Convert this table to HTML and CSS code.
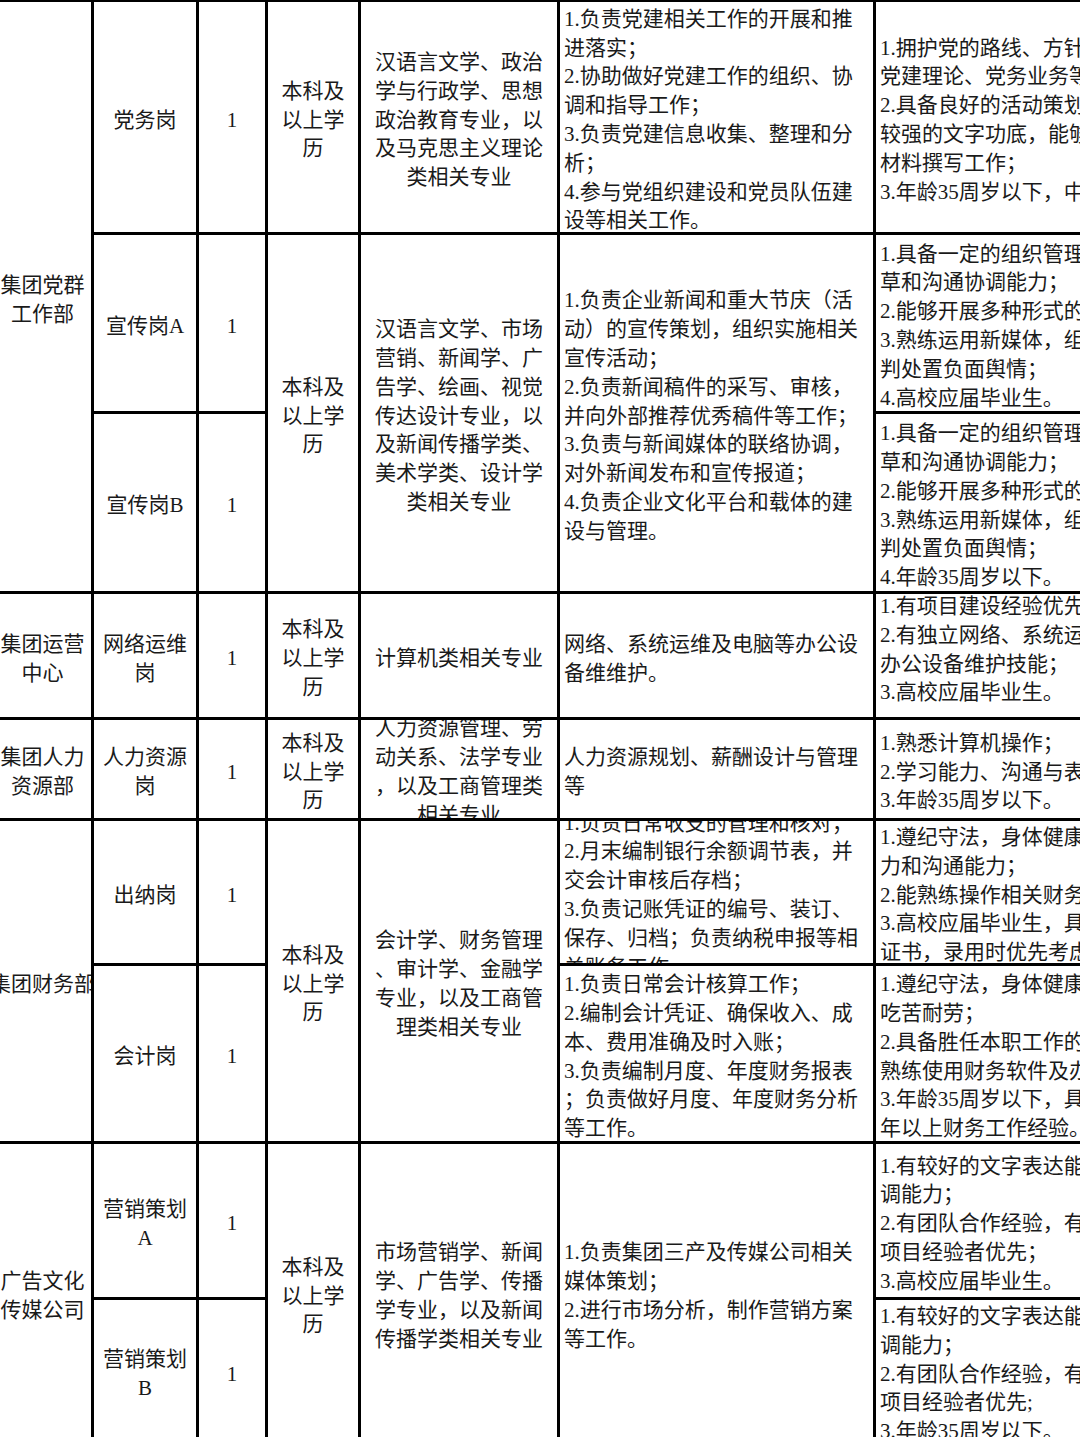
FILE: index.html
```html
<!DOCTYPE html>
<html lang="zh-CN">
<head>
<meta charset="utf-8">
<title>招聘岗位表</title>
<link rel="stylesheet" href="styles.css">
</head>
<body>
<div class="sheet">
  <!-- 集团党群工作部 -->
  <div class="cell k1 rs3 mid"><div class="t">集团党群<br>工作部</div></div>
  <div class="cell k2 mid"><div class="t">党务岗</div></div>
  <div class="cell k3 mid"><div class="t">1</div></div>
  <div class="cell k4 mid"><div class="t">本科及<br>以上学<br>历</div></div>
  <div class="cell k5 mid"><div class="t">汉语言文学、政治<br>学与行政学、思想<br>政治教育专业，以<br>及马克思主义理论<br>类相关专业</div></div>
  <div class="cell k6 left"><div class="t">1.负责党建相关工作的开展和推<br>进落实；<br>2.协助做好党建工作的组织、协<br>调和指导工作；<br>3.负责党建信息收集、整理和分<br>析；<br>4.参与党组织建设和党员队伍建<br>设等相关工作。</div></div>
  <div class="cell k7 left"><div class="t">1.拥护党的路线、方针、政策，熟悉<br>党建理论、党务业务等知识；<br>2.具备良好的活动策划能力，具有<br>较强的文字功底，能够胜任相关<br>材料撰写工作；<br>3.年龄35周岁以下，中共党员。</div></div>

  <div class="cell k2 mid"><div class="t">宣传岗A</div></div>
  <div class="cell k3 mid"><div class="t">1</div></div>
  <div class="cell k4 rs2 mid"><div class="t">本科及<br>以上学<br>历</div></div>
  <div class="cell k5 rs2 mid"><div class="t">汉语言文学、市场<br>营销、新闻学、广<br>告学、绘画、视觉<br>传达设计专业，以<br>及新闻传播学类、<br>美术学类、设计学<br>类相关专业</div></div>
  <div class="cell k6 rs2 left"><div class="t">1.负责企业新闻和重大节庆（活<br>动）的宣传策划，组织实施相关<br>宣传活动；<br>2.负责新闻稿件的采写、审核，<br>并向外部推荐优秀稿件等工作；<br>3.负责与新闻媒体的联络协调，<br>对外新闻发布和宣传报道；<br>4.负责企业文化平台和载体的建<br>设与管理。</div></div>
  <div class="cell k7 left"><div class="t">1.具备一定的组织管理能力和文字起<br>草和沟通协调能力；<br>2.能够开展多种形式的宣传活动；<br>3.熟练运用新媒体，组织引导舆论，研<br>判处置负面舆情；<br>4.高校应届毕业生。</div></div>

  <div class="cell k2 mid"><div class="t">宣传岗B</div></div>
  <div class="cell k3 mid"><div class="t">1</div></div>
  <div class="cell k7 left"><div class="t">1.具备一定的组织管理能力和文字起<br>草和沟通协调能力；<br>2.能够开展多种形式的宣传活动；<br>3.熟练运用新媒体，组织引导舆论，研<br>判处置负面舆情；<br>4.年龄35周岁以下。</div></div>

  <!-- 集团运营中心 -->
  <div class="cell k1 mid"><div class="t">集团运营<br>中心</div></div>
  <div class="cell k2 mid"><div class="t">网络运维<br>岗</div></div>
  <div class="cell k3 mid"><div class="t">1</div></div>
  <div class="cell k4 mid"><div class="t">本科及<br>以上学<br>历</div></div>
  <div class="cell k5 mid"><div class="t">计算机类相关专业</div></div>
  <div class="cell k6 left"><div class="t">网络、系统运维及电脑等办公设<br>备维维护。</div></div>
  <div class="cell k7 left lift"><div class="t">1.有项目建设经验优先；<br>2.有独立网络、系统运维及电脑等<br>办公设备维护技能；<br>3.高校应届毕业生。</div></div>

  <!-- 集团人力资源部 -->
  <div class="cell k1 mid"><div class="t">集团人力<br>资源部</div></div>
  <div class="cell k2 mid"><div class="t">人力资源<br>岗</div></div>
  <div class="cell k3 mid"><div class="t">1</div></div>
  <div class="cell k4 mid"><div class="t">本科及<br>以上学<br>历</div></div>
  <div class="cell k5 mid"><div class="t">人力资源管理、劳<br>动关系、法学专业<br>，以及工商管理类<br>相关专业</div></div>
  <div class="cell k6 left"><div class="t">人力资源规划、薪酬设计与管理<br>等</div></div>
  <div class="cell k7 left"><div class="t">1.熟悉计算机操作；<br>2.学习能力、沟通与表达能力强；<br>3.年龄35周岁以下。</div></div>

  <!-- 集团财务部 -->
  <div class="cell k1 rs2 mid"><div class="t">集团财务部</div></div>
  <div class="cell k2 mid"><div class="t">出纳岗</div></div>
  <div class="cell k3 mid"><div class="t">1</div></div>
  <div class="cell k4 rs2 mid"><div class="t">本科及<br>以上学<br>历</div></div>
  <div class="cell k5 rs2 mid"><div class="t">会计学、财务管理<br>、审计学、金融学<br>专业，以及工商管<br>理类相关专业</div></div>
  <div class="cell k6 left"><div class="t">1.负责日常收支的管理和核对；<br>2.月末编制银行余额调节表，并<br>交会计审核后存档；<br>3.负责记账凭证的编号、装订、<br>保存、归档；负责纳税申报等相<br>关账务工作。</div></div>
  <div class="cell k7 left"><div class="t">1.遵纪守法，身体健康，具有较强的学习能<br>力和沟通能力；<br>2.能熟练操作相关财务软件；<br>3.高校应届毕业生，具有初级会计资格<br>证书，录用时优先考虑。</div></div>

  <div class="cell k2 mid"><div class="t">会计岗</div></div>
  <div class="cell k3 mid"><div class="t">1</div></div>
  <div class="cell k6 left"><div class="t">1.负责日常会计核算工作；<br>2.编制会计凭证、确保收入、成<br>本、费用准确及时入账；<br>3.负责编制月度、年度财务报表<br>；负责做好月度、年度财务分析<br>等工作。</div></div>
  <div class="cell k7 left"><div class="t">1.遵纪守法，身体健康，能<br>吃苦耐劳；<br>2.具备胜任本职工作的专业知识，<br>熟练使用财务软件及办公软件；<br>3.年龄35周岁以下，具有2<br>年以上财务工作经验。</div></div>

  <!-- 广告文化传媒公司 -->
  <div class="cell k1 rs2 mid"><div class="t">广告文化<br>传媒公司</div></div>
  <div class="cell k2 mid"><div class="t">营销策划<br>A</div></div>
  <div class="cell k3 mid"><div class="t">1</div></div>
  <div class="cell k4 rs2 mid"><div class="t">本科及<br>以上学<br>历</div></div>
  <div class="cell k5 rs2 mid"><div class="t">市场营销学、新闻<br>学、广告学、传播<br>学专业，以及新闻<br>传播学类相关专业</div></div>
  <div class="cell k6 rs2 left"><div class="t">1.负责集团三产及传媒公司相关<br>媒体策划；<br>2.进行市场分析，制作营销方案<br>等工作。</div></div>
  <div class="cell k7 left"><div class="t">1.有较好的文字表达能力和沟通协<br>调能力；<br>2.有团队合作经验，有相关<br>项目经验者优先；<br>3.高校应届毕业生。</div></div>

  <div class="cell k2 mid"><div class="t">营销策划<br>B</div></div>
  <div class="cell k3 mid"><div class="t">1</div></div>
  <div class="cell k7 left"><div class="t">1.有较好的文字表达能力和沟通协<br>调能力；<br>2.有团队合作经验，有相关<br>项目经验者优先;<br>3.年龄35周岁以下。</div></div>
</div>
</body>
</html>
```

FILE: styles.css
```css
html,
body {
  margin: 0;
  padding: 0;
  background: #fff;
  overflow: hidden;
}

body {
  width: 1080px;
  height: 1437px;
  font-family: "Liberation Serif", "Noto Sans CJK SC", serif;
  font-size: 21px;
  line-height: 28.8px;
  color: #1a1a1a;
  text-spacing-trim: space-all;
}

.sheet {
  display: grid;
  grid-template-columns: 97px 102px 66px 90px 196px 313px 300px;
  grid-template-rows: 230px 176px 177px 123px 98px 142px 175px 153px 142px;
  gap: 3px;
  padding: 3px;
  background: #000;
  width: max-content;
  margin: -1px 0 0 -9px;
}

.cell {
  background: #fff;
  display: flex;
  flex-direction: column;
  justify-content: center;
  overflow: clip;
  box-sizing: border-box;
  padding: 6px 4px 0;
  min-width: 0;
  min-height: 0;
}

.k1 { grid-column: 1; }
.k2 { grid-column: 2; }
.k3 { grid-column: 3; }
.k4 { grid-column: 4; }
.k5 { grid-column: 5; }
.k6 { grid-column: 6; }
.k7 { grid-column: 7; }

.rs2 { grid-row-end: span 2; }
.rs3 { grid-row-end: span 3; }

.mid {
  align-items: center;
  text-align: center;
}

.left {
  align-items: flex-start;
  text-align: left;
}

.lift {
  padding-bottom: 18px;
}

.t {
  flex: none;
  white-space: nowrap;
}
```
